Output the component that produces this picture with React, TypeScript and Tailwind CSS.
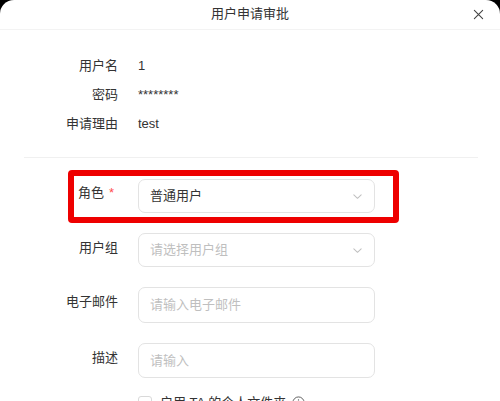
import React from "react";

const font = { fontFamily: '"Liberation Sans", "Noto Sans CJK SC", sans-serif' };

function Chevron() {
  return (
    <svg width="11" height="11" viewBox="0 0 12 12" fill="none">
      <path d="M2 4.2 L6 8 L10 4.2" stroke="#bfbfbf" strokeWidth="1.1" strokeLinecap="round" strokeLinejoin="round" />
    </svg>
  );
}

export default function App() {
  return (
    <div className="w-[500px] h-[401px] overflow-hidden bg-black" style={font}>
      <div className="w-[500px] h-[401px] bg-white rounded-t-[14px] text-[12px] text-[#333]">
        {/* header */}
        <div className="relative h-[30px] flex items-center justify-center border-b border-[#f3f3f3]">
          <span className="text-[13px] text-[#333] -mt-[1px]">用户申请审批</span>
          <div className="absolute right-[16px] top-[9px]">
            <svg width="11" height="11" viewBox="0 0 12 12">
              <path d="M1.5 1.5 L10.5 10.5 M10.5 1.5 L1.5 10.5" stroke="#444" strokeWidth="1.2" strokeLinecap="round" />
            </svg>
          </div>
        </div>

        {/* info */}
        <div className="pt-[21px] flex flex-col">
          {[
            ["用户名", "1"],
            ["密码", "********"],
            ["申请理由", "test"],
          ].map(([k, v]) => (
            <div key={k} className="flex h-[29px] items-center">
              <div className="w-[118px] text-right text-[13px]">{k}</div>
              <div className="ml-[20px] text-[13px]">{v}</div>
            </div>
          ))}
        </div>

        <div className="mt-[19px] ml-[24px] mr-[22px] h-px bg-[#f0f0f0]" />

        {/* form */}
        <div className="mt-[12px] flex flex-col">
          {/* role row with red box */}
          <div className="ml-[68px] w-[331px] h-[53px] border-[6px] border-[#ee0000] rounded-[4px] flex pt-[3px]">
            <div className="w-[44px] text-right pt-[4px] text-[13px] leading-[20px]">
              角色<span className="text-[#ff4d4f] ml-[5px] mr-[4px]">*</span>
            </div>
            <div className="ml-[20px] w-[237px] h-[34px] border border-[#e3e3e3] rounded-[7px] flex items-center justify-between pl-[11px] pr-[11px]">
              <span className="text-[13px] text-[#333]">普通用户</span>
              <Chevron />
            </div>
          </div>

          <div className="mt-[10px] flex">
            <div className="w-[118px] text-right pt-[5px] text-[13px] leading-[20px]">用户组</div>
            <div className="ml-[20px] w-[237px] h-[34px] border border-[#e3e3e3] rounded-[7px] flex items-center justify-between pl-[11px] pr-[11px]">
              <span className="text-[13px] text-[#bfbfbf]">请选择用户组</span>
              <Chevron />
            </div>
          </div>

          <div className="mt-[20px] flex">
            <div className="w-[118px] text-right pt-[5px] text-[13px] leading-[20px]">电子邮件</div>
            <div className="ml-[20px] w-[237px] h-[36px] border border-[#e3e3e3] rounded-[7px] flex items-center pl-[11px]">
              <span className="text-[13px] text-[#bfbfbf]">请输入电子邮件</span>
            </div>
          </div>

          <div className="mt-[20px] flex">
            <div className="w-[118px] text-right pt-[5px] text-[13px] leading-[20px]">描述</div>
            <div className="ml-[20px] w-[237px] h-[35px] border border-[#e3e3e3] rounded-[7px] flex items-center pl-[11px]">
              <span className="text-[13px] text-[#bfbfbf]">请输入</span>
            </div>
          </div>

          <div className="mt-[15px] ml-[138px] flex items-center">
            <div className="w-[14px] h-[14px] border border-[#d9d9d9] rounded-[3px]" />
            <span className="ml-[8px] text-[13px]">启用 TA 的个人文件夹</span>
            <svg className="ml-[6px]" width="13" height="13" viewBox="0 0 14 14" fill="none">
              <circle cx="7" cy="7" r="6" stroke="#555" strokeWidth="1" />
              <path d="M7 6.2 V10" stroke="#555" strokeWidth="1.1" />
              <circle cx="7" cy="4.2" r="0.7" fill="#555" />
            </svg>
          </div>
        </div>
      </div>
    </div>
  );
}
